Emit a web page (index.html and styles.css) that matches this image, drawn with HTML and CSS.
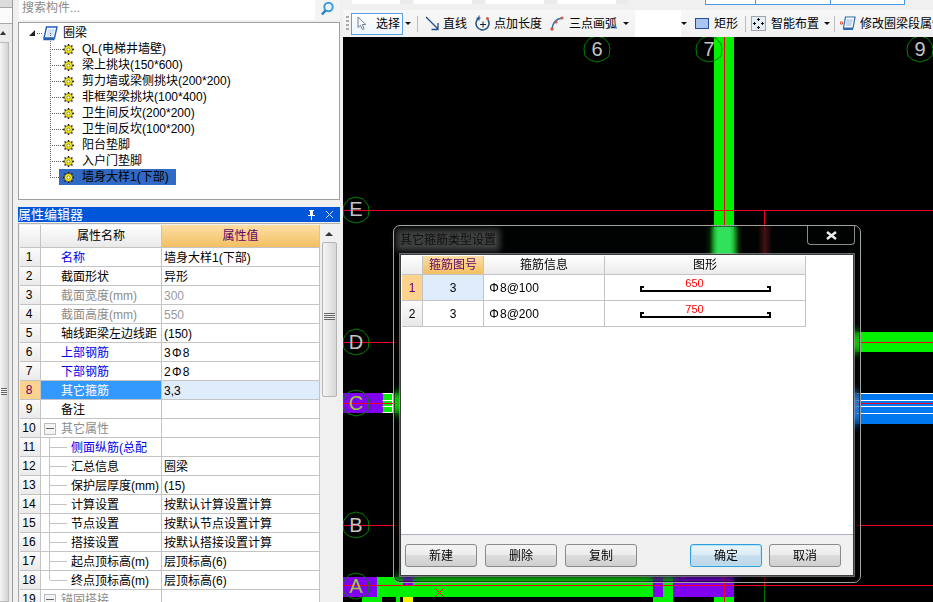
FILE: index.html
```html
<!DOCTYPE html>
<html lang="zh">
<head>
<meta charset="utf-8">
<title>其它箍筋类型设置</title>
<link rel="stylesheet" href="styles.css">
</head>
<body>
<svg class="defs" width="0" height="0" aria-hidden="true">
  <symbol id="gear" viewBox="0 0 11 11">
    <g stroke="#111" stroke-width="1.4"><path d="M5.5 0v11M0 5.5h11M1.6 1.6l7.8 7.8M9.4 1.6l-7.8 7.8"/></g>
    <circle cx="5.5" cy="5.5" r="4" fill="#ffee00" stroke="#333" stroke-width=".6"/>
    <circle cx="5.5" cy="5.5" r="1.6" fill="#fff" stroke="#444" stroke-width=".6"/>
  </symbol>
</svg>
<div class="app">
  <aside class="side">
    <div class="gutter">
      <div class="gutter-top"></div>
      <div class="gutter-white"></div>
      <div class="gutter-bar">
        <div class="gutter-arrow"></div>
        <div class="gutter-thumb"><div class="grip"></div></div>
      </div>
    </div>
    <div class="panel">
      <div class="search">
        <div class="search-input">搜索构件...</div>
        <div class="search-btn">
          <svg width="15" height="15" viewBox="0 0 15 15"><circle cx="8.5" cy="6" r="4.2" fill="#e8f4fc" stroke="#3f9ad8" stroke-width="2"/><path d="M5.5 9.5 2 13.5" stroke="#2f80c0" stroke-width="2.6"/></svg>
        </div>
      </div>
      <div class="tree">
        <div class="tree-root">
          <span class="tree-toggle"></span>
          <span class="tree-dots"></span>
          <svg width="15" height="15" viewBox="0 0 15 15"><path d="M3.5 1h10.5l-2.5 11H1z" fill="#fff" stroke="#1f5fb8" stroke-width="1.4"/><path d="M1 12h10.500v2.300H0z" fill="#1f5fb8"/><path d="M5 3h7l-1.600 7.500H3.400z" fill="#cfe2f6"/></svg>
          <span class="tree-label">圈梁</span>
        </div>
        <ul class="tree-list">
          <li class="tree-item"><svg class="gear"><use href="#gear"/></svg><span class="tree-label">QL(电梯井墙壁)</span></li>
          <li class="tree-item"><svg class="gear"><use href="#gear"/></svg><span class="tree-label">梁上挑块(150*600)</span></li>
          <li class="tree-item"><svg class="gear"><use href="#gear"/></svg><span class="tree-label">剪力墙或梁侧挑块(200*200)</span></li>
          <li class="tree-item"><svg class="gear"><use href="#gear"/></svg><span class="tree-label">非框架梁挑块(100*400)</span></li>
          <li class="tree-item"><svg class="gear"><use href="#gear"/></svg><span class="tree-label">卫生间反坎(200*200)</span></li>
          <li class="tree-item"><svg class="gear"><use href="#gear"/></svg><span class="tree-label">卫生间反坎(100*200)</span></li>
          <li class="tree-item"><svg class="gear"><use href="#gear"/></svg><span class="tree-label">阳台垫脚</span></li>
          <li class="tree-item"><svg class="gear"><use href="#gear"/></svg><span class="tree-label">入户门垫脚</span></li>
          <li class="tree-item selected"><svg class="gear"><use href="#gear"/></svg><span class="tree-label">墙身大样1(下部)</span></li>
        </ul>
      </div>
      <div class="prop-title">
        <span>属性编辑器</span>
        <span class="prop-actions">
          <svg width="9" height="10" viewBox="0 0 9 10"><path d="M2 0h5v1H6v4h2v1H5v4H4V6H1V5h2V1H2z" fill="#fff"/></svg>
          <svg width="9" height="9" viewBox="0 0 9 9"><path d="M1 1l7 7M8 1l-7 7" stroke="#cfe0ff" stroke-width="1"/></svg>
        </span>
      </div>
      <div class="prop-body">
        <table class="grid">
          <colgroup><col class="c-num"><col class="c-name"><col class="c-val"></colgroup>
          <thead>
            <tr class="head-row"><th></th><th>属性名称</th><th class="active">属性值</th></tr>
          </thead>
          <tbody>
            <tr><th>1</th><td class="link">名称</td><td>墙身大样1(下部)</td></tr>
            <tr><th>2</th><td>截面形状</td><td>异形</td></tr>
            <tr class="muted"><th>3</th><td>截面宽度(mm)</td><td>300</td></tr>
            <tr class="muted"><th>4</th><td>截面高度(mm)</td><td>550</td></tr>
            <tr><th>5</th><td>轴线距梁左边线距</td><td>(150)</td></tr>
            <tr><th>6</th><td class="link">上部钢筋</td><td>3<span class="phi">Φ</span>8</td></tr>
            <tr><th>7</th><td class="link">下部钢筋</td><td>2<span class="phi">Φ</span>8</td></tr>
            <tr class="current"><th>8</th><td>其它箍筋</td><td>3,3</td></tr>
            <tr><th>9</th><td>备注</td><td></td></tr>
            <tr class="muted group"><th>10</th><td><span class="minus"></span>其它属性</td><td></td></tr>
            <tr class="child"><th>11</th><td class="link clip">侧面纵筋(总配</td><td></td></tr>
            <tr class="child"><th>12</th><td>汇总信息</td><td>圈梁</td></tr>
            <tr class="child"><th>13</th><td>保护层厚度(mm)</td><td>(15)</td></tr>
            <tr class="child"><th>14</th><td>计算设置</td><td>按默认计算设置计算</td></tr>
            <tr class="child"><th>15</th><td>节点设置</td><td>按默认节点设置计算</td></tr>
            <tr class="child"><th>16</th><td>搭接设置</td><td>按默认搭接设置计算</td></tr>
            <tr class="child"><th>17</th><td>起点顶标高(m)</td><td>层顶标高(6)</td></tr>
            <tr class="child last"><th>18</th><td>终点顶标高(m)</td><td>层顶标高(6)</td></tr>
            <tr class="muted group"><th>19</th><td><span class="minus"></span>锚固搭接</td><td></td></tr>
          </tbody>
        </table>
        <div class="vscroll">
          <div class="vscroll-arrow"></div>
          <div class="vscroll-thumb"><div class="grip"></div></div>
        </div>
      </div>
    </div>
  </aside>

  <main class="work">
    <div class="tabs">
      <div class="tab-group">
        <span class="tab t1"></span><span class="tab t2"></span><span class="tab t2"></span><span class="tab t2"></span>
      </div>
      <div class="tab-blue">
        <span class="tb1"></span><span class="tb2"></span><span class="tb3"></span>
      </div>
    </div>
    <div class="toolbar">
      <div class="tool-grip"></div>
      <div class="tool tool-on">
        <svg width="11" height="15" viewBox="0 0 11 15"><path d="M1 1v10.500l2.500-2.300 1.800 4.300 1.800-.8-1.800-4.200h3.500z" fill="#fff" stroke="#6d7f96"/></svg>
        <span>选择</span>
      </div>
      <span class="caret caret-a"></span>
      <span class="sep"></span>
      <div class="tool t-line">
        <svg width="14" height="15" viewBox="0 0 14 15"><path d="M1 1l12 12M13 7v6.500H6.500" fill="none" stroke="#1f4f86" stroke-width="1.300"/></svg>
        <span>直线</span>
      </div>
      <div class="tool t-len">
        <svg width="16" height="17" viewBox="0 0 16 17"><path d="M4 3A6.500 6.500 0 1 0 13 5" fill="none" stroke="#1f4f86" stroke-width="1.500"/><path d="M4 .5v5M5.500 3h-4" stroke="#1f4f86"/><circle cx="12.500" cy="3.500" r="1.500" fill="#d2553f"/><path d="M8 6.500v6M5 9.500h6" stroke="#222"/></svg>
        <span>点加长度</span>
      </div>
      <div class="tool t-arc">
        <svg width="14" height="15" viewBox="0 0 14 15"><path d="M2 13C2.500 7 6 3 12 2" fill="none" stroke="#2f6fb5" stroke-width="1.500"/><circle cx="2" cy="13" r="1.700" fill="#d9543f"/><circle cx="6" cy="6" r="1.500" fill="#d9543f"/><circle cx="12" cy="2" r="1.500" fill="#d9543f"/></svg>
        <span>三点画弧</span>
      </div>
      <span class="caret caret-b"></span>
      <div class="tool-blank"></div>
      <span class="caret caret-c"></span>
      <div class="tool t-rect">
        <svg width="14" height="11" viewBox="0 0 14 11"><rect x=".5" y=".5" width="13" height="10" fill="#a9c5f2" stroke="#27509c"/></svg>
        <span>矩形</span>
      </div>
      <span class="sep sep-b"></span>
      <div class="tool t-smart">
        <svg width="15" height="15" viewBox="0 0 15 15"><rect x=".5" y=".5" width="14" height="14" fill="#e6eef7" stroke="#556" stroke-dasharray="1 1"/><path d="M7.500 2v3M6 3.500h3M7.500 10v3M6 11.500h3M2 7.500h3M3.500 6v3M10 7.500h3M11.500 6v3" stroke="#111"/></svg>
        <span>智能布置</span>
        <span class="caret caret-d"></span>
      </div>
      <span class="sep sep-c"></span>
      <div class="tool t-edit">
        <svg width="16" height="15" viewBox="0 0 16 15"><path d="M5.500 1H15l-2 11H3.500z" fill="#fff" stroke="#2f6aa8" stroke-width="1.200"/><path d="M3.500 12H13v2H3z" fill="#2f6aa8"/><path d="M6.500 3h6.500l-1.500 7H5.500z" fill="#c3d9ee"/><circle cx="1.500" cy="7" r="1.300" fill="none" stroke="#d9442f"/></svg>
        <span>修改圈梁段属性</span>
      </div>
    </div>
    <div class="canvas">
      <svg class="drawing" width="590" height="565" viewBox="343 37 590 565">
        <rect x="343" y="37" width="590" height="565" fill="#000"/>
        <rect x="714" y="37" width="20" height="240" fill="#00f000"/>
        <rect x="840" y="332" width="93" height="20" fill="#00f000"/>
        <rect x="840" y="393" width="93" height="31" fill="#0078f0"/>
        <path d="M840 393.500h93M840 400.500h93M840 406.500h93M840 413.500h93" stroke="#fff" fill="none"/>
        <rect x="343" y="393" width="40" height="20" fill="#8000f0"/>
        <rect x="383" y="393" width="30" height="20" fill="#00f000"/>
        <path d="M382.500 393.500h10v19h-10M382.500 400.500h10M382.500 406.500h10" fill="none" stroke="#fff"/>
        <rect x="343" y="577" width="34" height="20" fill="#8000f0"/>
        <rect x="377" y="577" width="276" height="20" fill="#00f000"/>
        <rect x="653" y="577" width="10" height="20" fill="#8000f0"/>
        <rect x="663" y="577" width="10" height="20" fill="#00f000"/>
        <rect x="673" y="577" width="61" height="20" fill="#8000f0"/>
        <rect x="403" y="575" width="10" height="10" fill="#8000f0"/>
        <rect x="362" y="597" width="20" height="5" fill="#00f000"/>
        <rect x="396" y="586" width="4" height="16" fill="#00f000"/>
        <rect x="403" y="597" width="10" height="5" fill="#f0f000"/>
        <rect x="653" y="597" width="20" height="5" fill="#00f000"/>
        <rect x="714" y="597" width="20" height="5" fill="#00f000"/>
        <path d="M724.500 37v240M764.500 210v20M724.500 565v37M764.500 565v20" stroke="#f00020" fill="none"/>
        <path d="M764.500 586v16" stroke="#007000" fill="none"/>
        <path d="M343 210.500h590M343 342.500h590M343 403.500h590M343 525.500h590M343 585.500h590" stroke="#f00020" fill="none"/>
        <path d="M435 588l9 9M444 588l-9 9" stroke="#f00020" fill="none"/>
        <g fill="none" stroke="#008000">
          <polygon points="597,36 604,38 609,44 610,49 609,56 604,60 597,62 590,60 585,56 584,49 585,44 590,38"/>
          <polygon points="709,36 716,38 721,44 722,49 721,56 716,60 709,62 702,60 697,56 696,49 697,44 702,38"/>
          <polygon points="920,36 927,38 932,44 933,49 932,56 927,60 920,62 913,60 908,56 907,49 908,44 913,38"/>
          <polygon points="356,197 363,199 368,205 369,210 368,217 363,221 356,223 349,221 344,217 343,210 344,205 349,199"/>
          <polygon points="356,329 363,331 368,337 369,342 368,349 363,353 356,355 349,353 344,349 343,342 344,337 349,331"/>
          <polygon points="356,390 363,392 368,398 369,403 368,410 363,414 356,416 349,414 344,410 343,403 344,398 349,392"/>
          <polygon points="356,512 363,514 368,520 369,525 368,532 363,536 356,538 349,536 344,532 343,525 344,520 349,514"/>
          <polygon points="356,573 363,575 368,581 369,586 368,593 363,597 356,599 349,597 344,593 343,586 344,581 349,575"/>
        </g>
        <g class="axis">
          <text x="597" y="56">6</text>
          <text x="709" y="56">7</text>
          <text x="920" y="56">9</text>
          <text x="356" y="216">E</text>
          <text x="356" y="349">D</text>
          <text class="axis-on" x="356" y="410">C</text>
          <text x="356" y="532">B</text>
          <text class="axis-on" x="356" y="593">A</text>
        </g>
      </svg>
      <section class="dialog">
        <header class="dialog-head">
          <span class="dialog-title">其它箍筋类型设置</span>
          <span class="dialog-close">
            <svg width="13" height="9" viewBox="0 0 13 9"><path d="M2 1l9 7M11 1l-9 7" stroke="#eee" stroke-width="2.400"/></svg>
          </span>
        </header>
        <div class="dialog-client">
          <div class="dialog-sheet">
            <table class="stirrups">
              <colgroup><col class="s-num"><col class="s-no"><col class="s-info"><col class="s-shape"></colgroup>
              <thead>
                <tr class="s-head"><th></th><th class="active">箍筋图号</th><th>箍筋信息</th><th>图形</th></tr>
              </thead>
              <tbody>
                <tr class="current">
                  <th>1</th><td class="s-code">3</td><td><span class="phi">Φ</span>8@100</td>
                  <td><div class="rebar"><span class="rebar-len">650</span><div class="rebar-bar"></div></div></td>
                </tr>
                <tr>
                  <th>2</th><td class="s-code">3</td><td><span class="phi">Φ</span>8@200</td>
                  <td><div class="rebar"><span class="rebar-len">750</span><div class="rebar-bar"></div></div></td>
                </tr>
              </tbody>
            </table>
          </div>
          <footer class="dialog-foot">
            <div class="btn-group">
              <button class="btn">新建</button>
              <button class="btn">删除</button>
              <button class="btn">复制</button>
            </div>
            <div class="btn-group btn-group-end">
              <button class="btn primary">确定</button>
              <button class="btn">取消</button>
            </div>
          </footer>
        </div>
      </section>
    </div>
  </main>
</div>
</body>
</html>
```

FILE: styles.css
```css
* { box-sizing: border-box; }
html, body { margin: 0; padding: 0; height: 602px; overflow: hidden; }
body {
  font: 12px/16px "Liberation Sans", "Noto Sans CJK SC", sans-serif;
  color: #000;
  background: #f0f0f0;
}
.defs { position: absolute; }
.app { display: flex; width: 933px; height: 602px; overflow: hidden; }

/* left side */
.side { display: flex; width: 343px; flex: none; height: 602px; background: #f0f0f0; }
.gutter { width: 13px; flex: none; border-right: 1px solid #9c9c9c; display: flex; flex-direction: column; }
.gutter-top { height: 14px; background: #dcdcdc; border-bottom: 1px solid #a8a8a8; }
.gutter-white { height: 27px; background: #fbfbfb; border-bottom: 1px solid #a8a8a8; }
.gutter-bar { flex: 1; background: #ececec; padding-top: 7px; }
.gutter-arrow { width: 0; margin-left: 0; border: 3px solid transparent; border-bottom: 4px solid #333; border-top: 0; }
.gutter-thumb { height: 560px; width: 9px; margin-top: 7px; background: linear-gradient(90deg, #f5f5f5, #d4d4d4); border: 1px solid #bbb; border-left: 0; padding-top: 345px; }
.grip { height: 7px; margin: 0 1px; background: repeating-linear-gradient(#666 0 1px, #eee 1px 2px); }
.panel { width: 322px; margin-left: 5px; display: flex; flex-direction: column; }

.search { display: flex; height: 22px; padding-bottom: 2px; }
.search-input { width: 296px; margin-left: 1px; background: #fff; color: #8a8a8a; padding-left: 3px; font-size: 12px; line-height: 17px; }
.search-btn { width: 25px; display: flex; align-items: center; justify-content: center; padding-bottom: 3px; background: #f4f4f4; }

.tree { height: 178px; background: #fff; border: 1px solid #a0a0a0; padding: 2px 0 0 10px; }
.tree-root { display: flex; align-items: center; height: 16px; }
.tree-toggle { width: 0; height: 0; border-style: solid; border-width: 0 0 6px 6px; border-color: transparent transparent #222 transparent; }
.tree-dots { width: 5px; margin: 0 1px 0 2px; border-top: 1px dotted #666; }
.tree-root .tree-label { margin-left: 5px; }
.tree-list { list-style: none; margin: 0; padding: 0 0 0 30px; }
.tree-item { position: relative; display: flex; align-items: center; width: fit-content; height: 16px; padding: 0 2px 0 4px; white-space: nowrap; }
.tree-item::before { content: ""; position: absolute; left: -9px; top: -8px; width: 12px; height: 16px; border-left: 1px dotted #666; border-bottom: 1px dotted #666; }
.tree-item .tree-label { margin-left: 8px; }
.gear { width: 11px; height: 11px; flex: none; }
.selected { background: #316ac5; width: 117px; }

.prop-title { display: flex; justify-content: space-between; align-items: center; height: 15px; margin-top: 7px; padding-right: 6px; background: #0056d8; color: #fff; font-size: 13px; letter-spacing: 0; }
.prop-actions { display: flex; gap: 9px; align-items: center; }

.prop-body { flex: 1; display: flex; justify-content: space-between; margin-top: 1px; padding: 1px 0 0 1px; background: #f0f0f0; border-left: 1px solid #a8a8a8; min-height: 0; overflow: hidden; border-top: 1px solid #b0b0b0; }
.grid { width: 300px; table-layout: fixed; border-collapse: separate; border-spacing: 0; align-self: flex-start; background: #fff; border-right: 0; }
.c-num { width: 21px; } .c-name { width: 121px; } .c-val { width: 158px; }
.grid th, .grid td { height: 19px; padding: 0; border-right: 1px solid #c4c4c4; border-bottom: 1px solid #c4c4c4; white-space: nowrap; overflow: hidden; font-weight: 400; position: relative; }
.grid tbody th { background: linear-gradient(#fbfbfb, #eaeaea); text-align: center; padding-right: 2px; }
.grid tbody td { padding-top: 1px; }
.grid tbody td:nth-child(2) { padding-left: 20px; }
.grid tbody td:nth-child(3) { padding-left: 2px; }
.head-row th { height: 23px; background: linear-gradient(#fff, #e9e9e9); }
.grid .head-row .active, .stirrups .s-head .active { background: linear-gradient(#fbdfa6, #f2bf62); color: #660066; }
.link { color: #0000e6; }
.muted td { color: #8c8c8c; }
.muted td:nth-child(3) { color: #9a9a9a; }
.grid .current th { background: #fbd38f; color: #660066; }
.grid .current td:nth-child(2) { background: #3399ff; color: #fff; }
.grid .current td:nth-child(3) { background: #deecfb; }
.grid .child td:nth-child(2) { padding-left: 30px; }
.child td:nth-child(2)::before { content: ""; position: absolute; left: 8px; top: 0; bottom: -1px; width: 1px; background: #c4c4c4; }
.child td:nth-child(2)::after { content: ""; position: absolute; left: 9px; top: 9px; width: 17px; height: 1px; background: #c4c4c4; }
.last td:nth-child(2)::before { bottom: 9px; }
.grid .group td:nth-child(2) { padding-left: 3px; display: flex; align-items: center; gap: 5px; }
.minus { width: 12px; height: 12px; border: 1px solid #bbb; background: linear-gradient(90deg, #666, #666) center / 8px 1px no-repeat, #f4f4f4; flex: none; }
.phi { display: inline-block; width: 12px; text-align: center; }

.vscroll { width: 18px; margin-right: 2px; height: 176px; padding-top: 7px; background: #f0f0f0; }
.vscroll-arrow { width: 0; margin: 0 auto; border: 4px solid transparent; border-bottom-color: #333; border-top: 0; }
.vscroll-thumb { width: 15px; height: 155px; margin: 6px auto 0; padding-top: 70px; border: 1px solid #b4b4b4; border-radius: 2px; background: linear-gradient(90deg, #f4f4f4, #d8d8d8); }

/* work area */
.work { flex: 1; min-width: 0; display: flex; flex-direction: column; background: #f0f0f0; }
.tabs { display: flex; justify-content: space-between; height: 10px; padding-right: 28px; }
.tab-group { display: flex; height: 4px; gap: 2px; margin-left: 9px; }
.tab { background: #fff; height: 4px; border-right: 12px solid #ebebeb; }
.t1 { width: 60px; } .t2 { width: 70px; }
.tab-blue { display: flex; height: 4px; }
.tab-blue span { height: 5px; border: 1px solid #4a98e8; border-top: 0; background: #fff; }
.tb1 { width: 51px; } .tb2 { width: 75px; border-left: 0 !important; } .tb3 { width: 74px; border-left: 0 !important; }

.toolbar { display: flex; align-items: center; height: 27px; background: linear-gradient(#f7f7f7, #f1f1f1); white-space: nowrap; overflow: hidden; }
.tool { display: flex; align-items: center; flex: none; }
.tool-grip { width: 3px; height: 15px; margin-left: 3px; flex: none; background: repeating-linear-gradient(#aaa 0 2px, transparent 2px 4px); }
.tool-on { width: 52px; height: 22px; margin-left: 2px; padding-left: 5px; gap: 8px; border: 1px solid #5a9ee6; background: linear-gradient(#fff, #eef5fd); }
.caret { width: 0; height: 0; border: 3px solid transparent; border-top: 3px solid #111; border-bottom: 0; flex: none; }
.caret-a { margin-left: 2px; }
.sep { width: 1px; height: 16px; background: #bcbcbc; margin-left: 6px; flex: none; }
.t-line { margin-left: 7px; gap: 4px; }
.t-len { margin-left: 8px; gap: 3px; }
.t-arc { margin-left: 8px; gap: 5px; }
.caret-b { margin-left: 6px; }
.tool-blank { width: 46px; height: 27px; background: #fff; margin: 0 0 0 6px; flex: none; }
.caret-c { margin-left: 0; }
.t-rect { margin-left: 8px; gap: 5px; }
.sep-b { margin-left: 7px; }
.t-smart { margin-left: 5px; gap: 5px; }
.caret-d { margin-left: 0; }
.sep-c { margin-left: 4px; }
.t-edit { margin-left: 5px; gap: 4px; }

.canvas { position: relative; flex: 1; min-height: 0; background: #000; }
.drawing { display: block; }
.axis text { font: 20px "Liberation Sans", sans-serif; fill: #c4c4c4; text-anchor: middle; }
.axis .axis-on { fill: #9ccb3c; }

/* dialog */
.dialog {
  position: absolute; left: 50px; top: 188px; width: 468px; height: 358px;
  display: flex; flex-direction: column;
  padding: 0 6px 6px 6px;
  border: 1px solid #a0a0a0; border-radius: 7px;
  background:
    linear-gradient(90deg, transparent 316px, rgb(50, 225, 90) 324px, rgb(50, 225, 90) 336px, transparent 345px, transparent 364px, rgba(110, 30, 35, .6) 371px, transparent 378px) top / 100% 28px no-repeat,
    rgba(8, 14, 16, .12);
  -webkit-backdrop-filter: blur(5px); backdrop-filter: blur(5px);
  box-shadow: inset 0 0 0 1px rgba(0,0,0,.5);
}
.dialog-head { display: flex; justify-content: space-between; align-items: flex-start; height: 28px; flex: none; }
.dialog-title { margin-top: 7px; color: #111; font-size: 12px; line-height: 14px; background: rgba(255,255,255,.24); box-shadow: 0 0 6px 4px rgba(255,255,255,.24); }
.dialog-close { display: flex; align-items: center; justify-content: center; width: 48px; height: 19px; margin-right: -1px; border: 1px solid #8a8a8a; border-top: 0; border-radius: 0 0 4px 4px; }
.dialog-client { flex: 1; min-height: 0; display: flex; flex-direction: column; border: 1px solid #3a3f42; background: #f0f0f0; box-shadow: 0 0 0 1px rgba(170,170,180,.6); }
.dialog-sheet { height: 280px; background: #fff; padding: 1px; border-bottom: 1px solid #b0b0bc; }
.stirrups { width: 404px; table-layout: fixed; border-collapse: separate; border-spacing: 0; }
.s-num { width: 21px; } .s-no { width: 61px; } .s-info { width: 121px; } .s-shape { width: 201px; }
.stirrups th, .stirrups td { padding: 0; border-right: 1px solid #c4c4c4; border-bottom: 1px solid #c4c4c4; font-weight: 400; height: 26px; white-space: nowrap; }
.stirrups td { padding-left: 4px; }
.stirrups tbody th { background: linear-gradient(#fbfbfb, #e8e8e8); text-align: center; }
.stirrups .current th { background: #fbd38f; color: #660066; }
.s-head th { height: 19px; background: linear-gradient(#fff, #ebebeb); line-height: 16px; }
.stirrups td.s-code { padding-left: 0; text-align: center; }
.stirrups .current td.s-code { background: #deecfb; }
.rebar { width: 131px; margin-left: 31px; display: flex; flex-direction: column; align-items: center; }
.rebar-len { color: #f00; line-height: 12px; padding-right: 22px; font-size: 11px; }
.rebar-bar { width: 100%; height: 6px; margin: -3px 0 6px; border: 2px solid #000; border-top: 0; background: linear-gradient(#000, #000) left top / 2px 2px no-repeat, linear-gradient(#000, #000) right top / 2px 2px no-repeat; }

.dialog-foot { flex: 1; display: flex; justify-content: space-between; align-items: flex-start; padding: 9px 12px 0 4px; }
.btn-group { display: flex; gap: 8px; }
.btn-group-end { gap: 7px; }
.btn { width: 72px; height: 23px; padding: 0; font: inherit; color: #000; border: 1px solid #8a8a8a; border-radius: 3px; background: linear-gradient(#f4f4f4 0, #ececec 48%, #dcdcdc 50%, #cfcfcf 100%); }
.btn.primary { border: 1px solid #2f9fdc; box-shadow: inset 0 0 0 1px #b8e4f8; background: linear-gradient(#eaf5fb, #dcecf5 48%, #c9dfed 50%, #bcd6e8); }
```
